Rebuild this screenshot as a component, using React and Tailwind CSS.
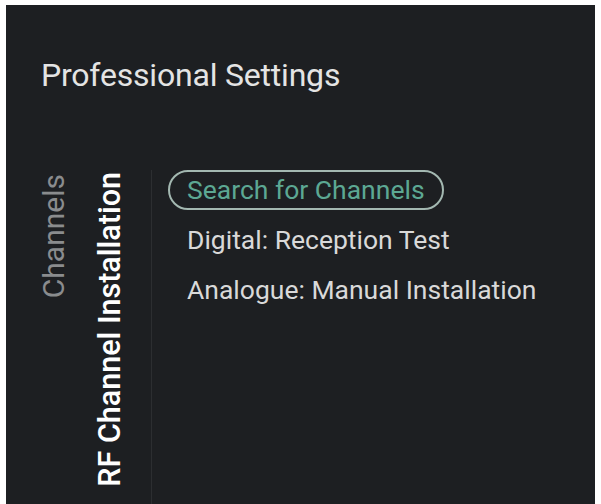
import React from "react";

const items = ["Digital: Reception Test", "Analogue: Manual Installation"];

export default function App() {
  return (
    <div className="w-[601px] h-[504px] bg-white pt-[5px] pl-[6px] pr-[6px] overflow-hidden font-['Roboto',sans-serif]">
      <div className="h-full bg-[#1d1f22] flex flex-col">
        {/* Title */}
        <div className="pl-[35px] pt-[51px] text-[32px] leading-[38px] text-[#e4e4e4] tracking-[-0.2px]">
          Professional Settings
        </div>

        <div className="flex flex-1 mt-[76px]">
          {/* Breadcrumb columns */}
          <div className="w-[63px] flex justify-end">
            <span className="[writing-mode:vertical-rl] rotate-180 text-[30px] leading-[30px] text-[#8a8c8e] mt-[4px] h-fit">
              Channels
            </span>
          </div>
          <div className="w-[83px] flex justify-center border-r border-[#2c2e31]">
            <span className="[writing-mode:vertical-rl] rotate-180 text-[30.5px] leading-[32px] font-medium text-white mt-[2px] h-fit">
              RF Channel Installation
            </span>
          </div>

          {/* Menu list */}
          <div className="flex flex-col items-start pl-[16px]">
            <div className="h-[40px] flex items-center px-[17px] rounded-full border-2 border-[#a3b8b1] text-[26.5px] text-[#5ca893]">
              Search for Channels
            </div>
            <ul className="pl-[19px]">
              {items.map((t) => (
                <li key={t} className="mt-[10px] h-[40px] flex items-center text-[26.5px] text-[#d9d9d9]">
                  {t}
                </li>
              ))}
            </ul>
          </div>
        </div>
      </div>
    </div>
  );
}
